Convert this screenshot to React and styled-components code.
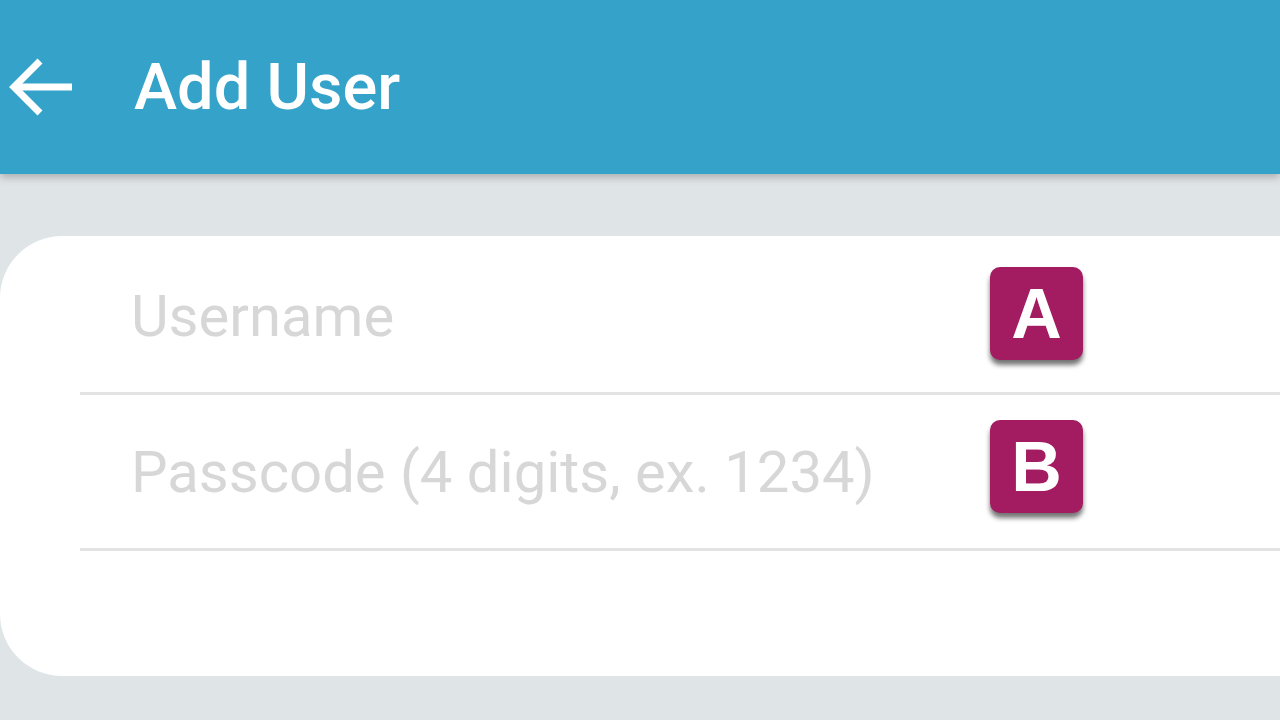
import React from "react"
import styled, { createGlobalStyle } from "styled-components"

const GlobalStyle = createGlobalStyle`
  html, body {
    margin: 0;
    padding: 0;
    background: #dfe4e7;
    font-family: Roboto, "Noto Sans", sans-serif;
    overflow: hidden;
  }
`

const Page = styled.div`
  width: 1280px;
  height: 720px;
  overflow: hidden;
`

const TopBar = styled.header`
  height: 174px;
  background: #35a2c9;
  display: flex;
  align-items: center;
  box-shadow: 0 3px 8px rgba(0, 0, 0, 0.25);
  position: relative;
  z-index: 2;
  color: #fff;
`

const BackButton = styled.button`
  border: 0;
  background: none;
  padding: 0;
  margin: 0 0 0 5px;
  width: 70px;
  height: 70px;
  display: flex;
  align-items: center;
  justify-content: center;
  cursor: pointer;
`

const Title = styled.h1`
  margin: 0 0 0 59px;
  font-size: 65px;
  font-weight: 500;
`

const Card = styled.div`
  margin-top: 62px;
  padding-top: 3px;
  width: 1340px;
  height: 437px;
  background: #fff;
  border-radius: 62px;
`

const Field = styled.div`
  height: 153px;
  margin-left: 80px;
  border-bottom: 3px solid #e3e3e3;
  display: flex;
  align-items: center;
`

const Input = styled.input`
  width: 859px;
  margin-left: 51px;
  border: 0;
  outline: none;
  padding: 0;
  font-family: Roboto, sans-serif;
  font-size: 58px;
  color: #333;
  background: transparent;
  &::placeholder {
    color: #d7d7d7;
  }
`

const KeyBadge = styled.div`
  width: 93px;
  height: 93px;
  margin-top: ${(p) => p.shift}px;
  border-radius: 10px;
  background: #a31b60;
  color: #fff;
  display: flex;
  align-items: center;
  justify-content: center;
  font-family: "Liberation Sans", Arial, sans-serif;
  font-weight: bold;
  font-size: 70px;
  box-shadow: 0 5px 5px rgba(0, 0, 0, 0.55);
`

const BackArrow = () => (
  <svg width="68" height="68" viewBox="0 0 68 68" fill="none" stroke="#fff" strokeWidth="7">
    <path d="M8 34 H66" />
    <path d="M34 8 L8 34 L34 60" />
  </svg>
)

const App = () => {
  return (
    <Page>
      <GlobalStyle />
      <TopBar>
        <BackButton aria-label="Back">
          <BackArrow />
        </BackButton>
        <Title>Add User</Title>
      </TopBar>
      <Card>
        <Field>
          <Input placeholder="Username" />
          <KeyBadge shift={-4}>A</KeyBadge>
        </Field>
        <Field>
          <Input placeholder="Passcode (4 digits, ex. 1234)" />
          <KeyBadge shift={-10}>B</KeyBadge>
        </Field>
      </Card>
    </Page>
  )
}

export default App
